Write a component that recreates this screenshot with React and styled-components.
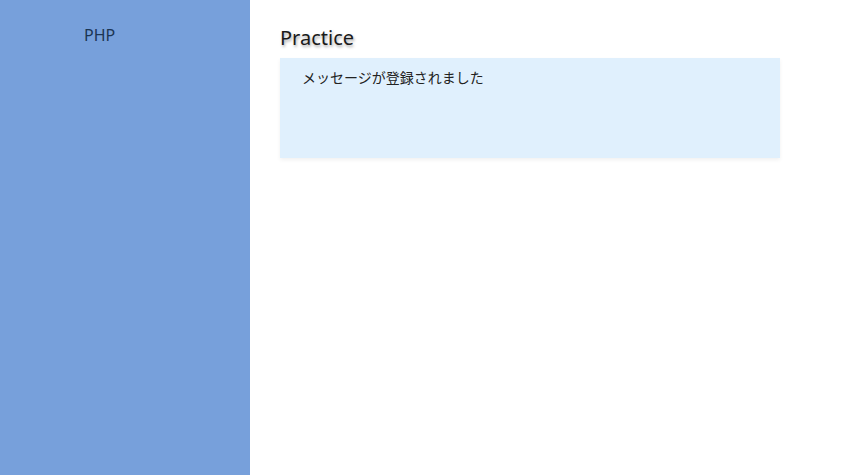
import React from "react";
import styled, { createGlobalStyle } from "styled-components";

const GlobalStyle = createGlobalStyle`
  html, body {
    margin: 0;
    padding: 0;
    height: 100%;
    background: #ffffff;
    font-family: "Noto Sans", "Noto Sans CJK JP", sans-serif;
  }
  #root {
    height: 100%;
  }
`;

const Layout = styled.div`
  display: flex;
  height: 475px;
`;

const Sidebar = styled.aside`
  width: 250px;
  flex-shrink: 0;
  background-color: #77a0db;
  padding: 24px 0 0 84px;
  box-sizing: border-box;
`;

const Brand = styled.div`
  color: #1c3553;
  font-size: 16px;
  line-height: 22px;
`;

const Main = styled.main`
  flex: 1;
  padding: 25px 0 0 30px;
`;

const Title = styled.h1`
  margin: 0 0 7px 0;
  font-size: 20px;
  font-weight: 400;
  line-height: 26px;
  color: #1a1a1a;
  text-shadow: 1px 2px 3px rgba(0, 0, 0, 0.35);
`;

const Notice = styled.div`
  width: 500px;
  height: 100px;
  box-sizing: border-box;
  padding: 9px 22px;
  background-color: #e0f0fd;
  box-shadow: 0 2px 4px rgba(0, 0, 0, 0.06);
  color: #222;
  font-family: "Noto Sans CJK JP", sans-serif;
  font-size: 14px;
  line-height: 20px;
`;

const App = () => {
  return (
    <>
      <GlobalStyle />
      <Layout>
        <Sidebar>
          <Brand>PHP</Brand>
        </Sidebar>
        <Main>
          <Title>Practice</Title>
          <Notice>メッセージが登録されました</Notice>
        </Main>
      </Layout>
    </>
  );
};

export default App;
